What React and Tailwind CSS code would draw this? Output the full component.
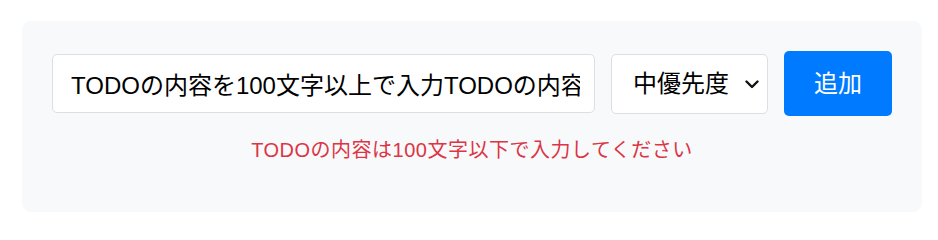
import React from "react";

export default function App() {
  const font = { fontFamily: '"Liberation Sans", "Noto Sans CJK JP", sans-serif' };
  return (
    <div className="w-[938px] h-[218px] bg-white pt-[21px] pl-[22px]" style={font}>
      <div className="w-[900px] h-[191px] rounded-[9px] bg-[#f8f9fa] px-[30px] pt-[30px]">
        <div className="flex items-center gap-4">
          <input
            readOnly
            value="TODOの内容を100文字以上で入力TODOの内容を100文字以上で入力TODOの内容を100文字以上で入力"
            className="flex-1 min-w-0 h-[59px] rounded-[5px] border border-[#dcdfe3] bg-white pl-[18px] pr-[14px] text-[24px] text-black outline-none"
            style={font}
          />
          <div className="flex h-[60px] w-[157px] items-center justify-between rounded-[5px] border border-[#dcdfe3] bg-white pl-[21px] pr-[8px] text-[24px] text-black">
            <span>中優先度</span>
            <svg width="14" height="9" viewBox="0 0 14 9" fill="none" className="mt-[1px]">
              <path d="M1.5 1.5L7 7L12.5 1.5" stroke="#111" strokeWidth="2.4" strokeLinecap="round" strokeLinejoin="round" />
            </svg>
          </div>
          <button className="flex h-[65px] w-[108px] items-center justify-center rounded-[5px] bg-[#007bff] text-[24px] text-white">
            追加
          </button>
        </div>
        <p className="mt-[19px] text-center text-[20px] leading-[30px] tracking-[0.5px] text-[#dc3545]">
          TODOの内容は100文字以下で入力してください
        </p>
      </div>
    </div>
  );
}
